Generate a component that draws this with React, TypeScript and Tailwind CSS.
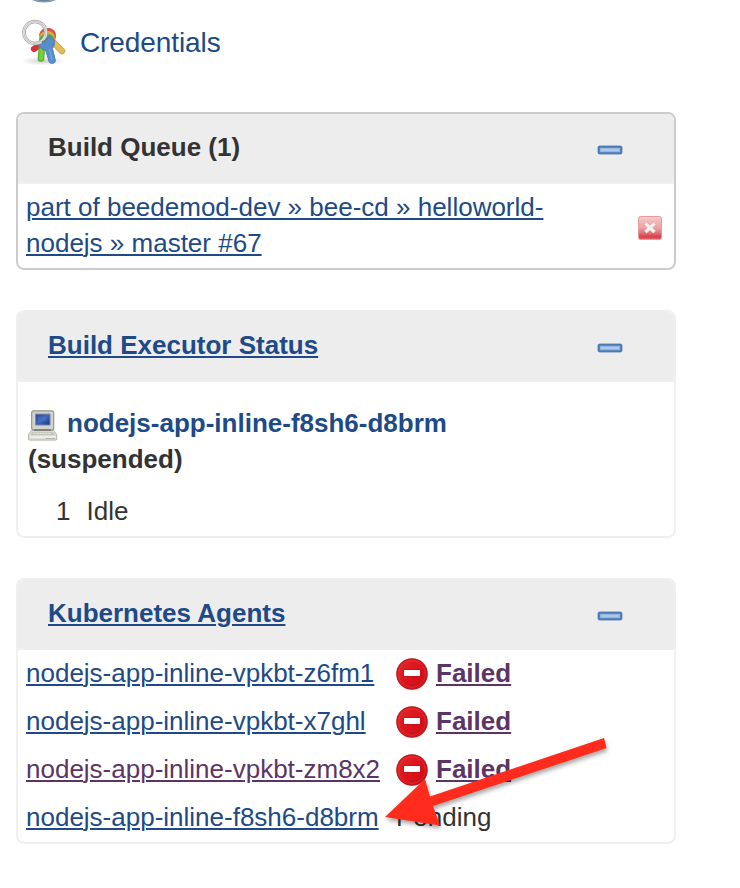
import type { ReactNode } from 'react';

const link = 'text-[#204a87] underline decoration-[1.6px] underline-offset-[2px]';
const visited = 'text-[#5c3566] underline decoration-[1.6px] underline-offset-[2px]';

function CollapseIcon() {
  return (
    <svg className="mt-[5px] h-[10px] w-[26px]" viewBox="0 0 26 10">
      <rect x="0.5" y="0.5" width="25" height="9" rx="2" fill="#7c9fcb" opacity="0.6" />
      <rect x="1.8" y="1.8" width="22.4" height="6.4" rx="1" fill="#94b6de" stroke="#4a7ab5" strokeWidth="2" />
      <path d="M4 5h18" stroke="#aecbeb" strokeWidth="1.8" />
    </svg>
  );
}

function CancelIcon() {
  return (
    <svg className="h-6 w-6" viewBox="0 0 24 24">
      <defs>
        <linearGradient id="cancel" x1="0" y1="0" x2="0" y2="1">
          <stop offset="0" stopColor="#f3cccd" />
          <stop offset="0.5" stopColor="#eba1a4" />
          <stop offset="0.68" stopColor="#e27a80" />
          <stop offset="0.88" stopColor="#d7404b" />
          <stop offset="1" stopColor="#de6870" />
        </linearGradient>
      </defs>
      <rect x="0.5" y="0.5" width="23" height="23" rx="2" fill="url(#cancel)" stroke="#e9999d" />
      <path d="M7.5 7.5l9 8.5M16.5 7.5l-9 8.5" stroke="#d98b8e" strokeWidth="5" strokeOpacity="0.45" />
      <path d="M7.5 7.5l9 8.5M16.5 7.5l-9 8.5" stroke="#f7efee" strokeWidth="3.4" />
    </svg>
  );
}

function FailedIcon() {
  return (
    <svg className="mt-[2px] h-8 w-8 shrink-0" viewBox="0 0 32 32">
      <defs>
        <linearGradient id="stop" x1="0" y1="0" x2="1" y2="1">
          <stop offset="0" stopColor="#e6262c" />
          <stop offset="0.5" stopColor="#dc141c" />
          <stop offset="1" stopColor="#cb0a15" />
        </linearGradient>
      </defs>
      <circle cx="16" cy="16" r="15.2" fill="url(#stop)" stroke="#b81a22" strokeWidth="1.2" />
      <circle cx="16" cy="16" r="13.4" fill="none" stroke="#ee5a5e" strokeWidth="0.8" strokeOpacity="0.4" />
      <rect x="7.3" y="11.3" width="17.4" height="7.6" fill="#b50d16" opacity="0.6" />
      <rect x="8" y="12" width="16" height="6" fill="#fff" />
    </svg>
  );
}

function ComputerIcon() {
  return (
    <svg className="mr-[9px] inline-block h-8 w-[30px] align-[-10px]" viewBox="0 0 30 32">
      <defs>
        <linearGradient id="screen" x1="0" y1="0" x2="1" y2="1">
          <stop offset="0" stopColor="#2449a0" />
          <stop offset="0.5" stopColor="#3f68b8" />
          <stop offset="1" stopColor="#1d3b8c" />
        </linearGradient>
      </defs>
      <path d="M3.5 20.5h22l3.2 4v4.6a1 1 0 0 1-1 1H1.4a1 1 0 0 1-1-1v-4.6z" fill="#dcdcd7" stroke="#b5b5ae" />
      <path d="M4.5 22.2h20.5l2 2.8H2.5z" fill="#c3c3bc" />
      <path d="M5.5 23.5h18" stroke="#e9e9e5" strokeWidth="1" strokeDasharray="2 1" />
      <path d="M2 27h26" stroke="#f0f0ed" strokeWidth="1.6" />
      <path d="M18 28.5h9" stroke="#b4b3ac" />
      <rect x="3.7" y="0.8" width="22" height="19.2" rx="2" fill="#d4d4ce" stroke="#969691" strokeWidth="1.2" />
      <path d="M6 20h17" stroke="#777771" strokeWidth="1.6" />
      <rect x="7" y="3.6" width="15.6" height="12" rx="0.8" fill="#8189a0" />
      <rect x="8" y="4.6" width="13.6" height="10" fill="url(#screen)" />
      <path d="M10 6.5h8v4l-8 2z" fill="#6285c7" opacity="0.35" />
    </svg>
  );
}

function KeysIcon() {
  return (
    <svg className="h-12 w-12 shrink-0" viewBox="0 0 48 48">
      <defs>
        <radialGradient id="shade">
          <stop offset="0" stopColor="#777" stopOpacity="0.4" />
          <stop offset="1" stopColor="#999" stopOpacity="0" />
        </radialGradient>
      </defs>
      <ellipse cx="22" cy="43" rx="22" ry="4.5" fill="url(#shade)" />
      <g strokeLinecap="round">
        <path d="M31 23L41 33" stroke="#cdab4c" strokeWidth="6.6" />
        <path d="M31 23L41 33" stroke="#e4be58" strokeWidth="4.4" />
        <path d="M20 26L13 31" stroke="#d6303a" strokeWidth="6.2" />
        <path d="M21 28L20 40.5" stroke="#55ab2c" strokeWidth="6.6" />
        <path d="M21 28L20 40.5" stroke="#78d03c" strokeWidth="4.2" />
      </g>
      <path d="M18 17c1-5 5-7.5 10-7 4.5.5 7.5 4 7 9l-2 7-12-1z" fill="#dc5045" />
      <path d="M18 20c.5-5 4.5-7.5 9.5-7 4.5.5 6.8 4 6.3 8l-3 6-11-1z" fill="#e2ac3c" />
      <path d="M18 22c.5-4.5 4.5-6.8 9-6.3 4.5.4 7 3.8 6.3 7.8l-3 6-11-1z" fill="#5fad3c" />
      <path d="M18.2 26c0-4.6 3.4-8 7.8-8 5 0 7.8 3.5 7.3 8-.2 2-.9 3.3-1.9 4.3l3 12.1c.4 3.2-5.4 4.3-6.4 1.2L24.6 32c-3.6.2-6.4-2.4-6.4-6z" fill="#568dca" stroke="#4a7db8" strokeWidth="0.9" />
      <path d="M28.5 31l2.6 11" stroke="#6fa2da" strokeWidth="1.6" />
      <circle cx="14" cy="14.5" r="11" fill="none" stroke="#a8a8a8" strokeWidth="3.6" />
      <circle cx="14" cy="14.5" r="11" fill="none" stroke="#e6e6e6" strokeWidth="2.2" />
      <circle cx="14" cy="14.5" r="11" fill="none" stroke="#b4b4b4" strokeWidth="0.6" />
      <path d="M21 24.5c3-1 4.6-2.5 6-5" fill="none" stroke="#5c7f88" strokeWidth="2" />
    </svg>
  );
}

function Pane({ title, strong, children }: { title: ReactNode; strong?: boolean; children: ReactNode }) {
  return (
    <section className={`w-[660px] rounded-lg border-2 ${strong ? 'border-[#cccccc]' : 'border-[#f0f0f0]'}`}>
      <header className="flex h-[70px] items-center justify-between rounded-t-md border-b-2 border-[#f0f0f0] bg-[#ededed] pr-[51px] pb-0.5 pl-[30px] font-bold">
        <h2>{title}</h2>
        <CollapseIcon />
      </header>
      {children}
    </section>
  );
}

const agents = [
  { name: 'nodejs-app-inline-vpkbt-z6fm1', failed: true, seen: false },
  { name: 'nodejs-app-inline-vpkbt-x7ghl', failed: true, seen: false },
  { name: 'nodejs-app-inline-vpkbt-zm8x2', failed: true, seen: true },
  { name: 'nodejs-app-inline-f8sh6-d8brm', failed: false, seen: false },
];

export default function App() {
  return (
    <main className="relative h-[888px] w-[740px] overflow-hidden bg-white pl-4 font-['Liberation_Sans',Arial,sans-serif] text-[26px] leading-9 text-[#333333]">
      <div className="h-[18px] pl-3">
        <svg className="block h-[4px] w-[34px]" viewBox="0 0 34 4">
          <ellipse cx="16" cy="-5" rx="16" ry="7.5" fill="#8796ab" />
          <ellipse cx="16" cy="-4" rx="10" ry="5" fill="#637da5" />
        </svg>
      </div>
      <div className="flex h-12 items-center gap-[11px] pl-[5px] text-[28px] text-[#204a87]">
        <KeysIcon />
        <a className="pt-[2px] tracking-[-0.1px]">Credentials</a>
      </div>

      <div className="mt-[46px] flex flex-col gap-10">
        <Pane title="Build Queue (1)" strong>
          <div className="flex h-[84px] items-start justify-between pt-[5px] pr-3 pl-2">
            <a className={`${link} w-[540px]`}>part of beedemod-dev » bee-cd » helloworld-<br />nodejs » master #67</a>
            <div className="mt-[27px]"><CancelIcon /></div>
          </div>
        </Pane>

        <Pane title={<a className={link}>Build Executor Status</a>}>
          <div className="h-[154px] pt-[23px] pl-[10px]">
            <div className="h-[72px] font-bold">
              <div className="h-9"><ComputerIcon /><a className="text-[#204a87]">nodejs-app-inline-f8sh6-d8brm</a></div>
              <div>(suspended)</div>
            </div>
            <div className="mt-4 flex gap-4 pl-[28px]">
              <span>1</span>
              <span>Idle</span>
            </div>
          </div>
        </Pane>

        <Pane title={<a className={link}>Kubernetes Agents</a>}>
          <ul className="flex flex-col gap-0.5 pb-0.5 pl-2">
            {agents.map((agent) => (
              <li key={agent.name} className="flex h-[46px] items-center">
                <a className={`${agent.seen ? visited : link} w-[370px] whitespace-nowrap`}>{agent.name}</a>
                {agent.failed ? (
                  <div className="flex items-center gap-2">
                    <FailedIcon />
                    <a className={`${visited} font-bold`}>Failed</a>
                  </div>
                ) : (
                  <span>Pending</span>
                )}
              </li>
            ))}
          </ul>
        </Pane>
      </div>

      <svg className="absolute top-[730px] left-[370px] h-[120px] w-[250px] drop-shadow-[1px_3px_2px_rgba(0,0,0,0.35)]" viewBox="370 730 250 120">
        <path d="M385 817L425 779L430 796.5L604 738L606.5 748L433 806L440 825.5Z" fill="#ff2b1c" />
      </svg>
    </main>
  );
}
